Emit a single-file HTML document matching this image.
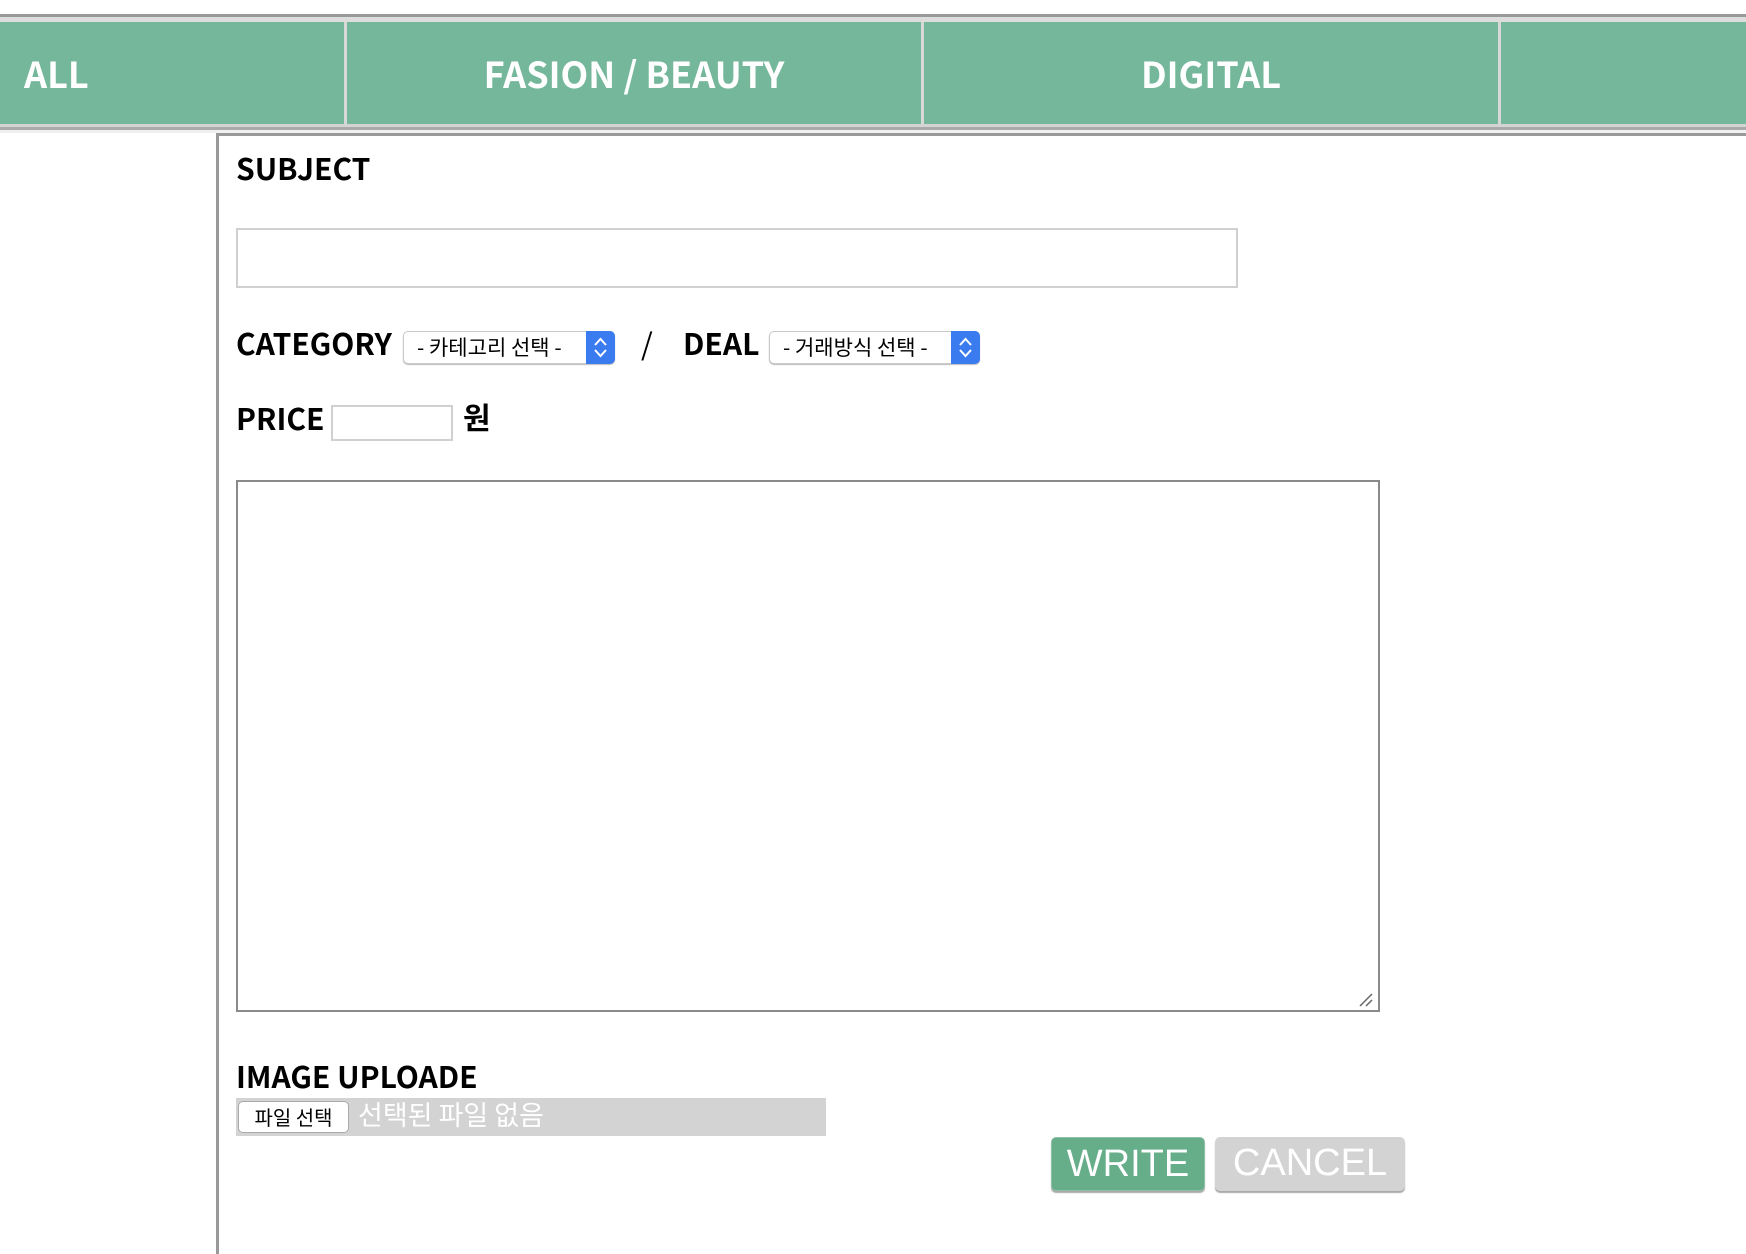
<!DOCTYPE html>
<html><head><meta charset="utf-8"><style>
*{margin:0;padding:0;box-sizing:border-box}
body{width:1746px;height:1254px;background:#fff;position:relative;overflow:hidden;font-family:"Liberation Sans","Noto Sans CJK KR",sans-serif}
.a{position:absolute}
.tab{position:absolute;top:22px;height:102px;background:#75b79b;color:#fff;font-weight:bold;font-size:36px;line-height:102px;text-align:center;font-family:"Noto Sans CJK KR",sans-serif}
.lbl{position:absolute;font-weight:bold;font-size:30px;color:#000;font-family:"Noto Sans CJK KR","Liberation Sans",sans-serif}
.sel{position:absolute;height:33px;border:1px solid #c8c8c8;border-radius:5px;background:#fff;font-size:21px;line-height:31px;padding-left:13px;font-family:"Noto Sans CJK KR",sans-serif;box-shadow:0 1px 1px #bbb}
.sel svg{position:absolute;right:-1px;top:-1px}
</style></head><body>
<div class="a" style="left:0;top:14px;width:1746px;height:3px;background:#999"></div>
<div class="a" style="left:0;top:17px;width:1746px;height:5px;background:#ddd"></div>
<div class="tab" style="left:0;width:344px;text-align:left;padding-left:24px">ALL</div>
<div class="a" style="left:344px;top:22px;width:3px;height:102px;background:#d8d8d8"></div>
<div class="tab" style="left:347px;width:574px">FASION / BEAUTY</div>
<div class="a" style="left:921px;top:22px;width:3px;height:102px;background:#d8d8d8"></div>
<div class="tab" style="left:924px;width:574px">DIGITAL</div>
<div class="a" style="left:1498px;top:22px;width:3px;height:102px;background:#d8d8d8"></div>
<div class="tab" style="left:1501px;width:245px"></div>
<div class="a" style="left:0;top:124px;width:1746px;height:3px;background:#d4d4d4"></div>
<div class="a" style="left:0;top:127px;width:1746px;height:3px;background:#aaa"></div>
<div class="a" style="left:0;top:130px;width:1746px;height:3px;background:#f0f0f0"></div>
<div class="a" style="left:216px;top:133px;width:1530px;height:3px;background:#999"></div>
<div class="a" style="left:216px;top:133px;width:3px;height:1121px;background:#999"></div>

<div class="lbl" style="left:236px;top:145px">SUBJECT</div>
<div class="a" style="left:236px;top:228px;width:1002px;height:60px;border:2px solid #d0d0d0"></div>

<div class="lbl" style="left:236px;top:320px">CATEGORY</div>
<div class="sel" style="left:403px;top:331px;width:212px">- 카테고리 선택 -<svg width="29" height="33"><rect width="29" height="33" rx="5" fill="#3a7cf0"/><rect width="6" height="33" fill="#3a7cf0"/><path d="M9 14L14.5 8L20 14M9 19L14.5 25L20 19" stroke="#fff" stroke-width="2" fill="none"/></svg></div>
<div class="lbl" style="left:641px;top:320px;font-weight:normal">/</div>
<div class="lbl" style="left:683px;top:320px">DEAL</div>
<div class="sel" style="left:769px;top:331px;width:211px">- 거래방식 선택 -<svg width="29" height="33"><rect width="29" height="33" rx="5" fill="#3a7cf0"/><rect width="6" height="33" fill="#3a7cf0"/><path d="M9 14L14.5 8L20 14M9 19L14.5 25L20 19" stroke="#fff" stroke-width="2" fill="none"/></svg></div>

<div class="lbl" style="left:236px;top:395px">PRICE</div>
<div class="a" style="left:331px;top:405px;width:122px;height:36px;border:2px solid #d0d0d0"></div>
<div class="lbl" style="left:463px;top:394px">원</div>

<div class="a" style="left:236px;top:480px;width:1144px;height:532px;border:2px solid #8a8a8a"></div>
<svg class="a" style="left:1358px;top:992px" width="16" height="16"><path d="M2 14L14 2M8 14L14 8" stroke="#666" stroke-width="1.5"/></svg>

<div class="lbl" style="left:236px;top:1053px">IMAGE UPLOADE</div>
<div class="a" style="left:236px;top:1098px;width:590px;height:38px;background:#d3d3d3"></div>
<div class="a" style="left:238px;top:1101px;width:111px;height:32px;background:#fff;border:1px solid #aaa;border-radius:5px;font-size:20px;line-height:30px;text-align:center;font-family:'Noto Sans CJK KR',sans-serif">파일 선택</div>
<div class="a" style="left:358px;top:1094px;color:#fff;font-size:27px;font-family:'Noto Sans CJK KR',sans-serif">선택된 파일 없음</div>

<div class="a" style="left:1051px;top:1137px;width:154px;height:54px;background:#66ad8a;border-radius:5px;border:1px solid #8fbfa5;box-shadow:0 2px 1px #aaa;color:#fff;font-size:38px;line-height:52px;text-align:center">WRITE</div>
<div class="a" style="left:1215px;top:1137px;width:190px;height:54px;background:#d3d3d3;border-radius:5px;box-shadow:0 2px 1px #aaa;color:#fff;font-size:38px;line-height:52px;text-align:center">CANCEL</div>
</body></html>
